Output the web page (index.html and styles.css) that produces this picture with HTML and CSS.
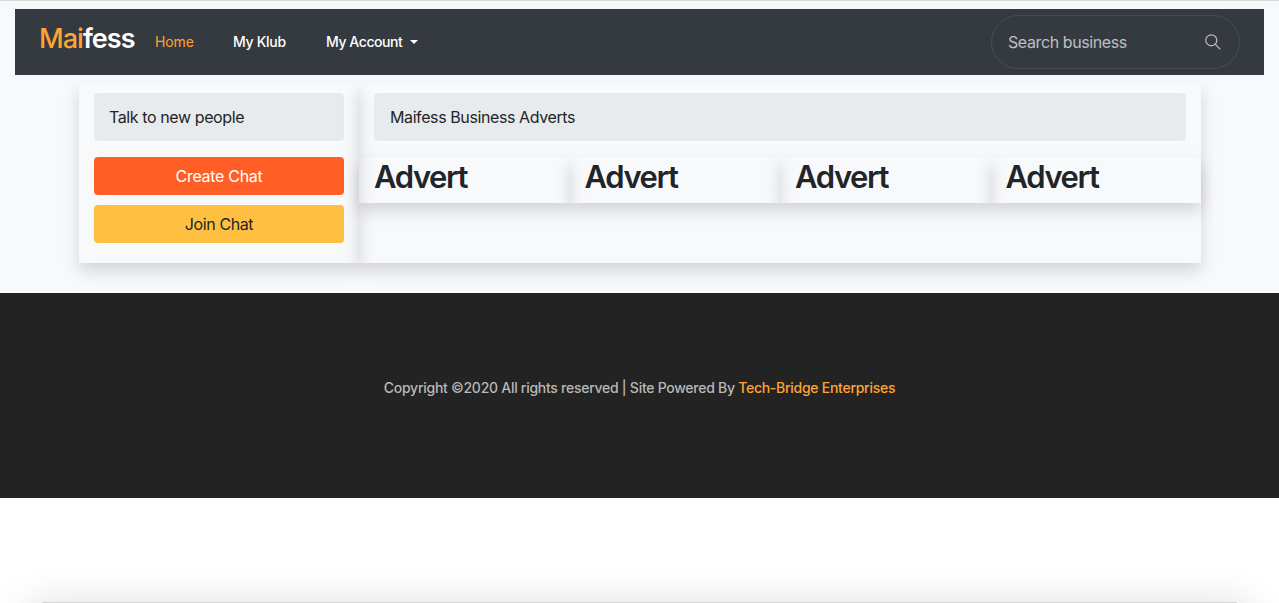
FILE: index.html
```html
<!DOCTYPE html>
<html lang="en">
<head>
<meta charset="utf-8">
<title>Maifess</title>
<link rel="stylesheet" href="styles.css">
</head>
<body>
<div class="page">
  <nav class="navbar">
    <a class="brand"><span class="accent">Mai</span>fess</a>
    <a class="nav-link nav-home accent">Home</a>
    <a class="nav-link nav-klub">My Klub</a>
    <a class="nav-link nav-account">My Account<span class="caret"></span></a>
    <div class="search">
      <span class="search-text">Search business</span>
      <svg class="search-icon" viewBox="0 0 16 16" fill="none" stroke="currentColor" stroke-width="1.2"><circle cx="6.3" cy="6.3" r="5.5"/><path d="M10.3 10.3L15.3 15.3"/></svg>
    </div>
  </nav>
  <main class="row">
    <section class="side">
      <div class="alert"><span class="t-talk">Talk to new people</span></div>
      <a class="btn create"><span class="t-create">Create Chat</span></a>
      <a class="btn join"><span class="t-join">Join Chat</span></a>
    </section>
    <section class="main">
      <div class="alert"><span class="t-biz">Maifess Business Adverts</span></div>
      <div class="adverts">
        <div class="advert"><h2>Advert</h2></div>
        <div class="advert"><h2>Advert</h2></div>
        <div class="advert"><h2>Advert</h2></div>
        <div class="advert"><h2>Advert</h2></div>
      </div>
    </section>
  </main>
</div>
<footer class="footer"><p>Copyright ©2020 All rights reserved | Site Powered By <a class="accent">Tech-Bridge Enterprises</a></p></footer>
<div class="bottom"><div class="panel-edge"></div></div>
</body>
</html>
```
FILE: styles.css
```css
* { box-sizing: border-box; }
body { margin: 0; height: 603px; overflow: hidden; display: flex; flex-direction: column; background: #fff; color: #212529; font: 400 16px/24px Inter, "Liberation Sans", sans-serif; }
.page { height: 293px; flex: none; background: #f8f9fb; border-top: 1px solid #d9dadd; padding: 8px 15px 0; }
.navbar { height: 66px; display: flex; align-items: center; background: #343a40; color: #fff; padding: 0 24px 0 24px; }
.accent { color: #ffa334; }
.brand { width: 96px; margin: 0 20px 6px 0; font-size: 27px; line-height: 42px; font-weight: 600; letter-spacing: -0.95px; white-space: nowrap; }
.brand .accent { font-weight: 500; }
.nav-link { font-size: 14px; font-weight: 500; letter-spacing: -0.3px; white-space: nowrap; }
.nav-home { width: 78px; font-weight: 400; letter-spacing: -0.1px; }
.nav-klub { width: 93px; }
.nav-account { letter-spacing: -0.43px; }
.caret { display: inline-block; margin-left: 8px; vertical-align: 3px; border: 4px solid transparent; border-top-color: #fff; border-bottom: 0; }
.search { width: 249px; height: 54px; margin-left: auto; border: 1px solid #484d51; border-radius: 27px; display: flex; align-items: center; justify-content: space-between; padding: 0 18px 0 16px; color: #bdc0c3; }
.search-text { letter-spacing: -0.4px; }
.search-icon { width: 16px; height: 16px; margin-bottom: 1px; }
.row { display: flex; height: 180px; margin: 8px 63px 0 64px; }
.side, .main { box-shadow: 0 8px 16px rgba(0,0,0,.15); padding-top: 10px; }
.side { width: 280px; padding-left: 15px; padding-right: 15px; }
.main { flex: 1; }
.alert { height: 48px; border-radius: 4px; background: #e8ebee; padding: 12px 16px; margin-bottom: 16px; }
.side .alert { padding-left: 15px; }
.main .alert { margin-left: 15px; margin-right: 15px; }
.btn { display: block; height: 38px; border-radius: 4px; padding: 7px; margin-bottom: 10px; text-align: center; }
.create { background: #ff5f26; color: #fff; }
.join { background: #ffc042; }
.t-talk, .t-biz, .t-join { letter-spacing: -0.4px; }
.t-create { letter-spacing: -0.3px; }
.adverts { display: grid; grid-template-columns: repeat(4, 1fr); }
.advert { height: 46px; padding-left: 15px; box-shadow: 0 8px 16px rgba(0,0,0,.15); }
h2 { margin: 0; font-size: 31px; line-height: 39px; font-weight: 600; letter-spacing: -1.4px; }
.footer { height: 205px; flex: none; background: #232323; color: #b8b8b8; display: flex; justify-content: center; padding-top: 83px; }
.footer p { margin: 0; font-size: 14px; line-height: 24px; font-weight: 500; letter-spacing: -0.27px; white-space: nowrap; }
.bottom { height: 105px; flex: none; overflow: hidden; display: flex; align-items: flex-end; padding: 0 42px; }
.panel-edge { flex: 1; height: 1px; background: #d5d5d5; box-shadow: 0 22px 44px 14px rgba(0,0,0,.2); }
```
